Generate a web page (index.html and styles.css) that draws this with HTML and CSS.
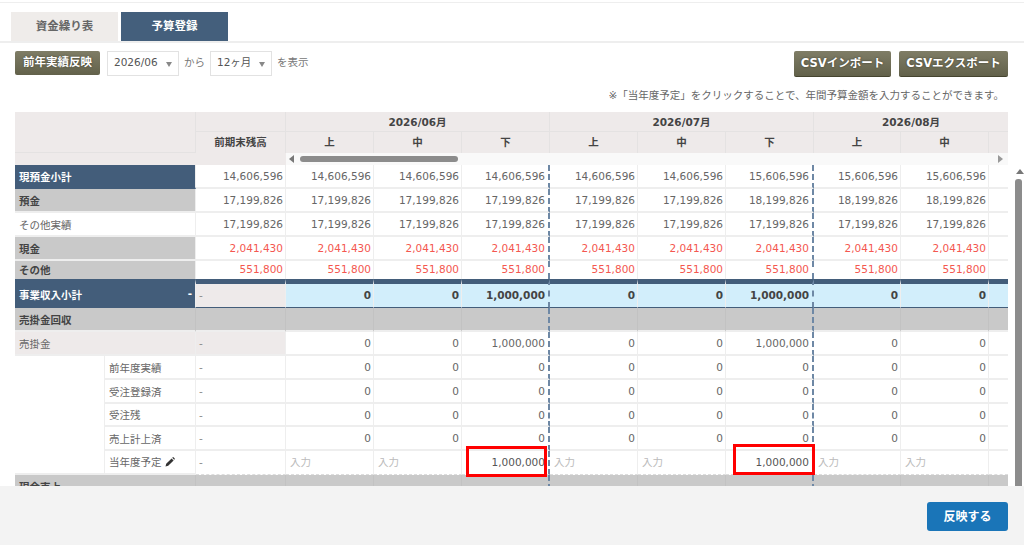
FILE: index.html
```html
<!DOCTYPE html>
<html lang="ja">
<head>
  <meta charset="UTF-8" />
  <title>予算登録</title>
  <link rel="stylesheet" href="styles.css">
</head>
<body>
  <div class="page">
    <div class="main">
      <div class="tabs">
        <div class="tab">資金繰り表</div>
        <div class="tab active">予算登録</div>
      </div>

      <div class="toolbar">
        <button class="btn btn-small">前年実績反映</button>
        <div class="select select-month">2026/06<span class="caret"></span></div>
        <span class="word">から</span>
        <div class="select select-range">12ヶ月<span class="caret"></span></div>
        <span class="word">を表示</span>
        <div class="toolbar-right">
          <button class="btn btn-csv">CSVインポート</button>
          <button class="btn btn-csv">CSVエクスポート</button>
        </div>
      </div>

      <p class="note">※「当年度予定」をクリックすることで、年間予算金額を入力することができます。</p>

      <div class="sheet">
        <table class="grid head">
          <colgroup>
            <col class="c-a"><col class="c-b"><col class="c-p"><col class="c-d"><col class="c-d"><col class="c-d"><col class="c-d"><col class="c-d"><col class="c-d"><col class="c-e"><col class="c-d"><col class="c-z">
          </colgroup>
          <tr class="h1">
            <th colspan="2" rowspan="2"></th>
            <th></th>
            <th colspan="3">2026/06月</th>
            <th colspan="3">2026/07月</th>
            <th colspan="3">2026/08月</th>
          </tr>
          <tr class="h2">
            <th>前期末残高</th>
            <th>上</th><th>中</th><th>下</th>
            <th>上</th><th>中</th><th>下</th>
            <th>上</th><th>中</th><th></th>
          </tr>
        </table>

        <div class="hscroll">
          <div class="hscroll-blank"></div>
          <div class="hscroll-track">
            <span class="arrow-left"></span>
            <span class="thumb"></span>
            <span class="arrow-right"></span>
          </div>
        </div>

        <div class="body-wrap">
          <table class="grid data">
            <colgroup>
              <col class="c-a"><col class="c-b"><col class="c-p"><col class="c-d"><col class="c-d"><col class="c-d"><col class="c-d"><col class="c-d"><col class="c-d"><col class="c-e"><col class="c-d"><col class="c-z">
            </colgroup>
            <tr>
              <td colspan="2" class="label navy">現預金小計</td>
              <td>14,606,596</td><td>14,606,596</td><td>14,606,596</td><td class="end">14,606,596</td><td>14,606,596</td><td>14,606,596</td><td class="end">15,606,596</td><td>15,606,596</td><td>15,606,596</td><td></td>
            </tr>
            <tr>
              <td colspan="2" class="label gray">預金</td>
              <td>17,199,826</td><td>17,199,826</td><td>17,199,826</td><td class="end">17,199,826</td><td>17,199,826</td><td>17,199,826</td><td class="end">18,199,826</td><td>18,199,826</td><td>18,199,826</td><td></td>
            </tr>
            <tr>
              <td colspan="2" class="label plain">その他実績</td>
              <td>17,199,826</td><td>17,199,826</td><td>17,199,826</td><td class="end">17,199,826</td><td>17,199,826</td><td>17,199,826</td><td class="end">17,199,826</td><td>17,199,826</td><td>17,199,826</td><td></td>
            </tr>
            <tr class="red">
              <td colspan="2" class="label gray">現金</td>
              <td>2,041,430</td><td>2,041,430</td><td>2,041,430</td><td class="end">2,041,430</td><td>2,041,430</td><td>2,041,430</td><td class="end">2,041,430</td><td>2,041,430</td><td>2,041,430</td><td></td>
            </tr>
            <tr class="red short">
              <td colspan="2" class="label gray">その他</td>
              <td>551,800</td><td>551,800</td><td>551,800</td><td class="end">551,800</td><td>551,800</td><td>551,800</td><td class="end">551,800</td><td>551,800</td><td>551,800</td><td></td>
            </tr>
            <tr class="total">
              <td colspan="2" class="label navy"><span class="total-name">事業収入小計<span>-</span></span></td>
              <td class="dash light">-</td>
              <td>0</td><td>0</td><td class="end">1,000,000</td><td>0</td><td>0</td><td class="end">1,000,000</td><td>0</td><td>0</td><td></td>
            </tr>
            <tr class="band">
              <td colspan="2" class="label">売掛金回収</td>
              <td></td><td></td><td></td><td class="end"></td><td></td><td></td><td class="end"></td><td></td><td></td><td></td>
            </tr>
            <tr>
              <td colspan="2" class="label light">売掛金</td>
              <td class="dash light">-</td>
              <td>0</td><td>0</td><td class="end">1,000,000</td><td>0</td><td>0</td><td class="end">1,000,000</td><td>0</td><td>0</td><td></td>
            </tr>
            <tr>
              <td rowspan="5" class="plain"></td>
              <td class="label plain">前年度実績</td>
              <td class="dash">-</td>
              <td>0</td><td>0</td><td class="end">0</td><td>0</td><td>0</td><td class="end">0</td><td>0</td><td>0</td><td></td>
            </tr>
            <tr>
              <td class="label plain">受注登録済</td>
              <td class="dash">-</td>
              <td>0</td><td>0</td><td class="end">0</td><td>0</td><td>0</td><td class="end">0</td><td>0</td><td>0</td><td></td>
            </tr>
            <tr class="tight">
              <td class="label plain">受注残</td>
              <td class="dash">-</td>
              <td>0</td><td>0</td><td class="end">0</td><td>0</td><td>0</td><td class="end">0</td><td>0</td><td>0</td><td></td>
            </tr>
            <tr>
              <td class="label plain">売上計上済</td>
              <td class="dash">-</td>
              <td>0</td><td>0</td><td class="end">0</td><td>0</td><td>0</td><td class="end">0</td><td>0</td><td>0</td><td></td>
            </tr>
            <tr class="entry">
              <td class="label plain">当年度予定
                <svg class="pencil" width="10" height="10" viewBox="0 0 10 10"><path d="M0.5 9.5 L1.2 6.8 L6.6 1.4 L8.6 3.4 L3.2 8.8 Z M7.2 0.8 L7.8 0.3 Q8.2 0 8.6 0.3 L9.7 1.4 Q10 1.8 9.7 2.2 L9.2 2.8 Z" fill="#333"/></svg>
              </td>
              <td class="dash">-</td>
              <td class="input">入力</td><td class="input">入力</td>
              <td class="end value">1,000,000<span class="mark mark-a"></span></td>
              <td class="input">入力</td><td class="input">入力</td>
              <td class="end value">1,000,000<span class="mark mark-b"></span></td>
              <td class="input">入力</td><td class="input">入力</td><td></td>
            </tr>
            <tr class="band">
              <td colspan="2" class="label">現金売上</td>
              <td></td><td></td><td></td><td class="end"></td><td></td><td></td><td class="end"></td><td></td><td></td><td></td>
            </tr>
          </table>
          <div class="vscroll">
            <span class="arrow-up"></span>
            <span class="vthumb"></span>
          </div>
        </div>
      </div>
    </div>

    <div class="footer">
      <button class="btn-apply">反映する</button>
    </div>
  </div>
</body>
</html>
```

FILE: styles.css
```css
html, body {
  margin: 0;
  padding: 0;
  height: 100%;
  background: #fff;
  overflow: hidden;
  font-family: "DejaVu Sans", "Noto Sans CJK JP", sans-serif;
  font-size: 10.5px;
  color: #666;
}

.page {
  display: flex;
  flex-direction: column;
  height: 100vh;
}

.main {
  flex: 1;
  min-height: 0;
  overflow: hidden;
}

/* tabs */
.tabs {
  display: flex;
  gap: 3px;
  height: 41px;
  padding: 9px 0 0 11px;
  box-sizing: border-box;
  margin-top: 2px;
  border-top: 1px solid #eee;
  border-bottom: 2px solid #eee;
}

.tab {
  width: 107px;
  height: 29px;
  line-height: 29px;
  text-align: center;
  background: #efecea;
  color: #666;
  font-size: 11.5px;
  font-weight: bold;
}

.tab.active {
  background: #445f7c;
  color: #fff;
}

/* toolbar */
.toolbar {
  display: flex;
  align-items: flex-start;
  padding: 8px 16px 0 15px;
  height: 26px;
}

.btn {
  border: none;
  padding: 0 0 4px;
  color: #fff;
  font-family: inherit;
  font-weight: bold;
  border-radius: 2px;
  background: linear-gradient(#7f7d66, #62614a);
  text-shadow: 0 0 2px rgba(0, 0, 0, 0.5);
}

.btn-small {
  width: 85px;
  height: 24px;
  font-size: 11.5px;
  margin-right: 7px;
}

.btn-csv {
  height: 26px;
  font-size: 11.5px;
  border-bottom: 1px solid #45442f;
}

.btn-csv:first-child {
  width: 97px;
}

.btn-csv:last-child {
  width: 109px;
}

.select {
  position: relative;
  height: 23px;
  line-height: 20px;
  padding-left: 6px;
  background: #fff;
  border: 1px solid #e2e2e2;
  color: #555;
  font-size: 10.5px;
}

.select-month {
  width: 64px;
}

.select-range {
  width: 54px;
}

.caret {
  position: absolute;
  right: 6px;
  top: 10px;
  border-left: 3px solid transparent;
  border-right: 3px solid transparent;
  border-top: 5px solid #888;
}

.word {
  line-height: 22px;
  margin: 0 5px;
  color: #777;
  font-size: 10.5px;
}

.toolbar-right {
  margin-left: auto;
  display: flex;
  gap: 8px;
}

.note {
  margin: 12px 20px 0 0;
  height: 23px;
  line-height: 13px;
  text-align: right;
  font-size: 10.5px;
  color: #666;
}

/* table */
.sheet {
  margin-left: 15px;
}

.grid {
  table-layout: fixed;
  width: 993px;
  border-collapse: separate;
  border-spacing: 0;
}

.c-a { width: 90px; }
.c-b { width: 91px; }
.c-p { width: 90px; }
.c-d { width: 88px; }
.c-e { width: 87px; }
.c-z { width: 19px; }

.head th {
  padding: 0 0 3px;
  box-sizing: border-box;
  background: #eeeaea;
  border-right: 1px solid #e4e2e2;
  color: #444;
  font-size: 10.5px;
  font-weight: bold;
  text-align: center;
}

.head th:last-child {
  border-right: none;
}

.h1 th {
  height: 20px;
  padding-bottom: 1px;
  border-bottom: 1px solid #e4e2e2;
}

.h2 th {
  height: 21px;
}

.hscroll {
  display: flex;
  width: 993px;
  height: 12px;
}

.hscroll-blank {
  width: 271px;
  background: #eeeaea;
}

.hscroll-track {
  flex: 1;
  display: flex;
  align-items: center;
  background: #f9f9f9;
  padding: 0 5px 0 3px;
}

.arrow-left {
  border-top: 4px solid transparent;
  border-bottom: 4px solid transparent;
  border-right: 5px solid #777;
}

.thumb {
  width: 158px;
  height: 6px;
  margin-left: 6px;
  background: #8c8c8c;
  border-radius: 3px;
}

.arrow-right {
  margin-left: auto;
  border-top: 4px solid transparent;
  border-bottom: 4px solid transparent;
  border-left: 5px solid #999;
}

.body-wrap {
  display: flex;
}

.data td {
  height: 24px;
  padding: 0 2px 0 0;
  box-sizing: border-box;
  text-align: right;
  color: #666;
  background: #fff;
  border-bottom: 2px solid #eee;
  border-right: 1px solid #eee;
  white-space: nowrap;
}

.data td:last-child {
  border-right: none;
}

.data td.label {
  text-align: left;
  padding-left: 4px;
}

.data td.navy {
  background: #435d7a;
  color: #fff;
  font-weight: bold;
  border-bottom-color: #435d7a;
}

.data td.gray {
  background: #c9c9c9;
  color: #444;
  font-weight: bold;
}

.data td.light {
  background: #eeeaea;
}

.data td.end {
  border-right: 2px dashed #6e88a5;
  padding-right: 3px;
}

.data td.dash {
  text-align: left;
  padding-left: 3px;
  color: #888;
}

.data .red td {
  color: #f4574f;
}

.data .red td.label {
  color: #444;
}

.data .short td {
  height: 18px;
  padding-bottom: 2px;
  border-bottom: none;
}

.data .tight td {
  height: 23px;
}

.data .total td {
  height: 29px;
  padding-bottom: 2px;
  border-top: 5px solid #435d7a;
  border-bottom: 1px solid #435d7a;
  background: #d2eefb;
  color: #444;
  font-weight: bold;
}

.data .total td.navy {
  background: #435d7a;
  color: #fff;
  padding-right: 3px;
}

.data .total td.dash {
  background: #eeeaea;
  font-weight: normal;
  color: #888;
}

.total-name {
  display: flex;
  justify-content: space-between;
}

.data .band td {
  background: #c9c9c9;
  color: #444;
  border-right-color: #c2c2c2;
}

.data .band td.label {
  font-weight: bold;
}

.data .band td.end {
  border-right-color: #6e88a5;
}

.data .entry td {
  padding-bottom: 2px;
  border-bottom: 1px dashed #ddd;
}

.data .entry td.label {
  border-bottom: 2px solid #eee;
}

.data td.input {
  text-align: left;
  padding-left: 4px;
  color: #bbb;
}

.data td.value {
  position: relative;
  color: #555;
}

.pencil {
  vertical-align: -1px;
}

.mark {
  position: absolute;
  border: 3px solid #f00;
  box-sizing: border-box;
  height: 31px;
}

.mark-a {
  left: 4px;
  top: -5px;
  width: 81px;
}

.mark-b {
  left: 7px;
  top: -7px;
  width: 82px;
}

.vscroll {
  position: relative;
  width: 16px;
}

.arrow-up {
  position: absolute;
  left: 8px;
  top: 4px;
  border-left: 4px solid transparent;
  border-right: 4px solid transparent;
  border-bottom: 5px solid #777;
}

.vthumb {
  position: absolute;
  left: 7px;
  top: 14px;
  bottom: 0;
  width: 7px;
  background: #8c8c8c;
  border-radius: 3px 3px 0 0;
}

/* footer */
.footer {
  height: 59px;
  box-sizing: border-box;
  padding: 16px 16px 0 0;
  background: #f3f3f3;
  display: flex;
  justify-content: flex-end;
  align-items: flex-start;
  flex-shrink: 0;
}

.btn-apply {
  width: 81px;
  height: 29px;
  padding: 0 0 2px;
  border: none;
  border-radius: 3px;
  background: #1a75b8;
  color: #fff;
  font-family: inherit;
  font-size: 12px;
  font-weight: bold;
}
```
